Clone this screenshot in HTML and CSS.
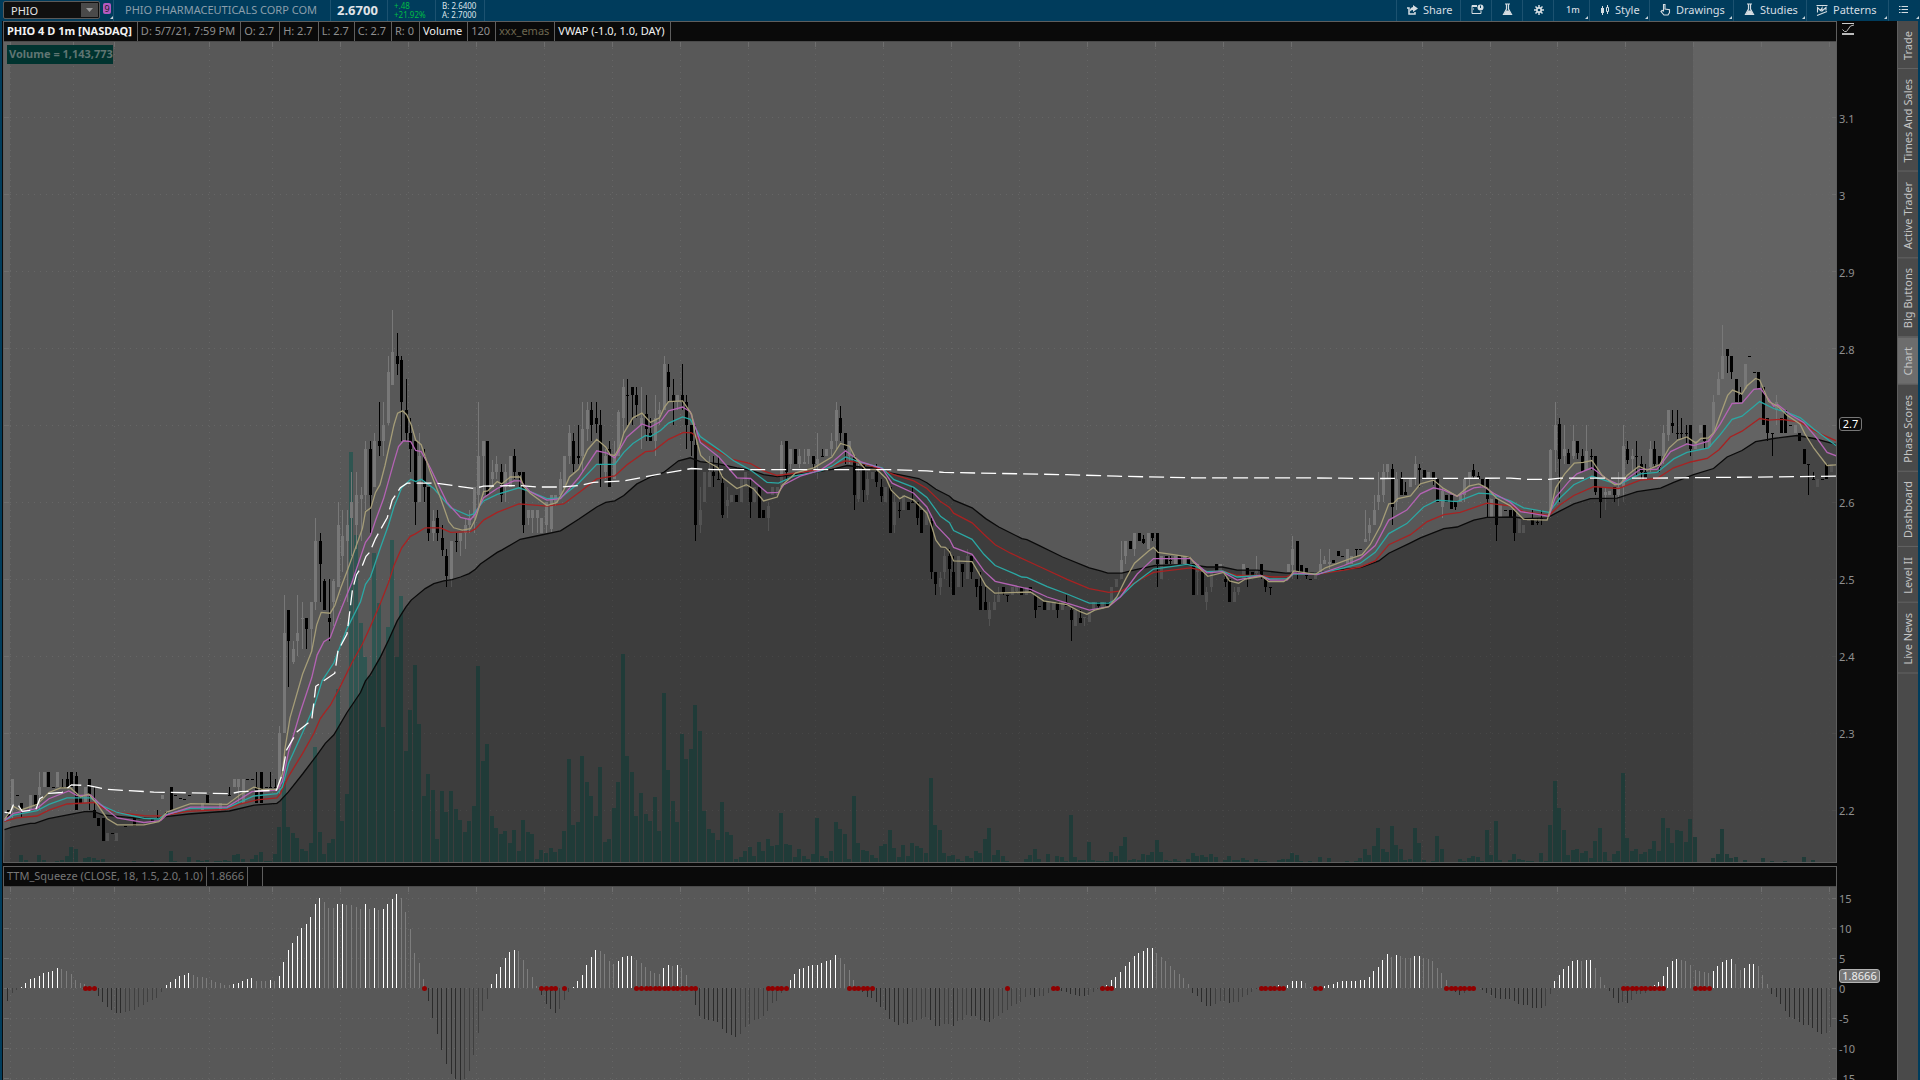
FILE: index.html
```html
<!DOCTYPE html>
<html lang="en">
  <head>
    <meta charset="UTF-8" />
    <meta name="viewport" content="width=device-width, initial-scale=1.0" />
    <title>PHIO 4 D 1m</title>
    <link rel="stylesheet" href="styles.css">
  </head>

  <body>
    <header class="toolbar">
      <div class="symbol-cell">
        <div class="symbol-box">
          <input type="text" id="symbol" value="PHIO" aria-label="Symbol" />
          <button type="button" class="drop" aria-label="Recent symbols">
            <svg width="7" height="4" viewBox="0 0 7 4"><path d="M0 0h7L3.5 4z" fill="#999" /></svg>
          </button>
        </div>
        <button type="button" class="link-badge more">9</button>
      </div>
      <div class="company">PHIO PHARMACEUTICALS CORP COM</div>
      <div class="last-price">2.6700</div>
      <div class="change"><span>+.48</span><span>+21.92%</span></div>
      <div class="quote"><span>B: 2.6400</span><span>A: 2.7000</span></div>

      <nav class="tools">
        <button type="button" class="tool share">
          <svg width="12" height="12" viewBox="0 0 12 12"><path d="M1 4h2v6h6V8" fill="none" stroke="#d5dde2" stroke-width="1.5" /><path d="M7 1l5 3.500-5 3.500V6C5 6 4 7 3.500 8.500 3.500 5 5 3.200 7 3z" fill="#d5dde2" /></svg>
          Share
        </button>
        <button type="button" class="tool icon" aria-label="Snapshot">
          <svg width="13" height="11" viewBox="0 0 13 11"><path d="M6 1.500H1v8h9V7" fill="none" stroke="#d5dde2" /><path d="M1 2.500h5M2 5h1" stroke="#d5dde2" /><circle cx="9.500" cy="3.500" r="3" fill="#d5dde2" /><path d="M9.500 1.500v2.500" stroke="#003c5c" /></svg>
        </button>
        <button type="button" class="tool icon" aria-label="Edit studies">
          <svg width="11" height="13" viewBox="0 0 11 13"><path d="M3 1h5M4.500 1v5L1.500 11.500h8L6.500 6V1" fill="none" stroke="#d5dde2" stroke-width="1.200" /><path d="M4 7.500h3l2.500 4.500h-8z" fill="#d5dde2" /></svg>
        </button>
        <button type="button" class="tool icon" aria-label="Settings">
          <svg width="12" height="12" viewBox="0 0 12 12"><path d="M6 1v10M1 6h10M2.500 2.500l7 7M9.500 2.500l-7 7" stroke="#d5dde2" stroke-width="1.500" /><circle cx="6" cy="6" r="3" fill="#d5dde2" /><circle cx="6" cy="6" r="1.300" fill="#003c5c" /></svg>
        </button>
        <button type="button" class="tool frame more">1m</button>
        <button type="button" class="tool style more">
          <svg width="10" height="12" viewBox="0 0 10 12"><path d="M2.500 2v9M7.500 1v9" stroke="#d5dde2" /><path d="M1 4h3v5H1z" fill="#d5dde2" /><path d="M6.500 3.500h2v4h-2z" fill="#003c5c" stroke="#d5dde2" /></svg>
          Style
        </button>
        <button type="button" class="tool drawings more">
          <svg width="11" height="13" viewBox="0 0 11 13"><path d="M3.500 8V1.500h1.500V6l4.500.8v2.700L8 12H4L1 8.500l1-1z" fill="none" stroke="#d5dde2" stroke-width="1.100" /></svg>
          Drawings
        </button>
        <button type="button" class="tool studies more">
          <svg width="11" height="13" viewBox="0 0 11 13"><path d="M3 1h5M4.500 1v5L1.500 11.500h8L6.500 6V1" fill="none" stroke="#d5dde2" stroke-width="1.200" /><path d="M4 7.500h3l2.500 4.500h-8z" fill="#d5dde2" /></svg>
          Studies
        </button>
        <button type="button" class="tool patterns more">
          <svg width="12" height="12" viewBox="0 0 12 12"><path d="M0.500 1.500h11M1 11.500L11 7.500M1.500 8.500V3.500l3 3L6 4v3l4-3.500v3" fill="none" stroke="#d5dde2" stroke-width="1.100" /></svg>
          Patterns
        </button>
        <button type="button" class="tool menu more" aria-label="Menu">
          <svg width="9" height="8" viewBox="0 0 9 8"><path d="M0 .5h1.500M0 3.500h1.500M0 6.500h1.500M2.500 .5H9M2.500 3.500H9M2.500 6.500H9" stroke="#d5dde2" /></svg>
        </button>
      </nav>
    </header>

    <main class="workspace">
      <section class="charts">
        <div class="pane price-pane">
          <div class="pane-body">
            <div class="pane-header">
              <strong class="hot">PHIO 4 D 1m [NASDAQ]</strong>
              <span>D: 5/7/21, 7:59 PM</span>
              <span>O: 2.7</span>
              <span>H: 2.7</span>
              <span>L: 2.7</span>
              <span>C: 2.7</span>
              <span>R: 0</span>
              <span class="hot">Volume</span>
              <span>120</span>
              <span class="emas">xxx_emas</span>
              <span class="hot">VWAP (-1.0, 1.0, DAY)</span>
            </div>
            <div class="plot">
              <svg id="priceChart" viewBox="4 42 1832 820" preserveAspectRatio="none"></svg>
              <div class="volume-tag">Volume = 1,143,773</div>
            </div>
          </div>
          <div class="axis price-axis">
            <button type="button" class="auto-scale" aria-label="Auto scale">
              <svg width="12" height="13" viewBox="0 0 12 13"><path d="M0 1.500h12" stroke="#ccc" /><path d="M0 12h12" stroke="#bbb" stroke-width="2" /><path d="M0.500 7.500L2.500 9.500H4.500L8.500 4 12 3" fill="none" stroke="#bbb" /></svg>
            </button>
            <span>3.1</span>
            <span>3</span>
            <span>2.9</span>
            <span>2.8</span>
            <span><b class="last">2.7</b></span>
            <span>2.6</span>
            <span>2.5</span>
            <span>2.4</span>
            <span>2.3</span>
            <span>2.2</span>
          </div>
        </div>

        <div class="pane study-pane">
          <div class="pane-body">
            <div class="pane-header">
              <span>TTM_Squeeze (CLOSE, 18, 1.5, 2.0, 1.0)</span>
              <span>1.8666</span>
              <span class="empty"></span>
            </div>
            <div class="plot">
              <svg id="squeezeChart" viewBox="4 887 1832 193" preserveAspectRatio="none"></svg>
            </div>
          </div>
          <div class="axis study-axis">
            <span>15</span>
            <span>10</span>
            <span>5</span>
            <span>0</span>
            <span>-5</span>
            <span>-10</span>
            <span>-15</span>
            <b class="value-tag">1.8666</b>
          </div>
        </div>
      </section>

      <nav class="side-tabs">
        <button type="button">Trade</button>
        <button type="button">Times And Sales</button>
        <button type="button">Active Trader</button>
        <button type="button">Big Buttons</button>
        <button type="button" class="active">Chart</button>
        <button type="button">Phase Scores</button>
        <button type="button">Dashboard</button>
        <button type="button">Level II</button>
        <button type="button">Live News</button>
      </nav>
    </main>

    <script src="chart.js"></script>
  </body>
</html>
```
FILE: styles.css
```css
* {
  box-sizing: border-box;
}

body {
  margin: 0;
  height: 100vh;
  display: flex;
  flex-direction: column;
  overflow: hidden;
  background: #0a0a0a;
  color: #8f8f8f;
  font-family: "Noto Sans", "Open Sans", sans-serif;
  font-size: 11px;
}

button {
  margin: 0;
  padding: 0;
  border: none;
  background: none;
  color: inherit;
  font: inherit;
}

/* top toolbar */

.toolbar {
  display: flex;
  flex: none;
  height: 21px;
  background: #003c5c;
}

.toolbar > div {
  border-right: 1px solid #1c5270;
}

.symbol-cell {
  display: flex;
  width: 114px;
  padding: 1px 0 0 3px;
  gap: 3px;
}

.symbol-box {
  display: flex;
  width: 97px;
  height: 18px;
  padding: 1px;
  border: 1px solid #5a5a5a;
  border-radius: 2px;
  background: #101010;
}

.symbol-box input {
  flex: 1;
  min-width: 0;
  padding: 0 0 0 6px;
  border: none;
  outline: none;
  background: none;
  color: #e4e4e4;
  font: inherit;
}

.drop {
  display: flex;
  align-items: center;
  justify-content: center;
  width: 17px;
  background: #4a4a4a;
}

.link-badge {
  position: relative;
  width: 8px;
  height: 11px;
  margin-top: 2px;
  border-radius: 2px;
  background: #b45ac0;
  color: #1c1c1c;
  font-size: 9px;
  line-height: 11px;
}

.company {
  width: 217px;
  padding-left: 11px;
  color: #8b9eab;
  line-height: 19px;
}

.last-price {
  width: 57px;
  padding-left: 6px;
  color: #e0e4e8;
  font-size: 13px;
  font-weight: bold;
  line-height: 21px;
}

.change,
.quote {
  display: flex;
  flex-direction: column;
  padding-left: 6px;
  font-size: 8px;
  line-height: 9px;
  padding-top: 1px;
}

.change {
  width: 48px;
  color: #00bc44;
}

.quote {
  width: 49px;
  color: #dde5ea;
}

.tools {
  display: flex;
  margin-left: auto;
}

.tool {
  position: relative;
  display: flex;
  align-items: center;
  gap: 5px;
  border-left: 1px solid #1c5270;
  padding: 0 0 2px 9px;
  color: #d5dde2;
}

.more::after {
  content: "";
  position: absolute;
  right: 1px;
  bottom: 2px;
  border-left: 3px solid transparent;
  border-bottom: 3px solid #c8d4da;
}

.link-badge::after {
  right: -2px;
  bottom: -5px;
}

.share {
  width: 64px;
}

.icon {
  width: 31px;
  padding-left: 10px;
}

.frame {
  width: 36px;
  padding-left: 12px;
  font-size: 9px;
  font-weight: 500;
}

.style {
  width: 60px;
  padding-left: 10px;
}

.drawings {
  width: 84px;
  padding-left: 10px;
}

.studies {
  width: 73px;
  padding-left: 10px;
}

.patterns {
  width: 82px;
}

.menu {
  width: 32px;
  padding-left: 10px;
}

/* chart area */

.workspace {
  display: flex;
  flex: 1;
  min-height: 0;
  border-left: 2px solid #003c5c;
  border-right: 2px solid #003c5c;
}

.charts {
  display: flex;
  flex: 1;
  flex-direction: column;
  min-width: 0;
  padding-left: 1px;
}

.pane {
  display: flex;
}

.price-pane {
  flex: 1;
  min-height: 0;
  margin-bottom: 3px;
}

.study-pane {
  height: 214px;
}

.pane-body {
  display: flex;
  flex: 1;
  flex-direction: column;
  min-width: 0;
  border: 1px solid #5e5e5e;
}

.study-pane .pane-body {
  border-bottom: none;
}

.pane-header {
  display: flex;
  flex: none;
  height: 20px;
  border-bottom: 1px solid #4a4a4a;
  line-height: 18px;
  white-space: nowrap;
}

.pane-header > * {
  padding: 0 5px 0 3px;
  border-right: 1px solid #5e5e5e;
}

.pane-header .hot {
  color: #f2f2f2;
}

.pane-header .emas {
  color: #6d6750;
}

.study-pane .pane-header {
  color: #777;
}

.study-pane .pane-header > * {
  padding: 0 3px;
}

.pane-header .empty {
  width: 15px;
}

.plot {
  position: relative;
  flex: 1;
  min-height: 0;
  background: #585858;
}

.plot svg {
  display: block;
  width: 100%;
  height: 100%;
}

.volume-tag {
  position: absolute;
  left: 3px;
  top: 3px;
  width: 106px;
  height: 19px;
  padding-left: 2px;
  background: #00332f;
  color: #5f7572;
  font-weight: bold;
  line-height: 18px;
  white-space: nowrap;
}

.axis {
  position: relative;
  display: flex;
  flex-direction: column;
  width: 60px;
  padding-left: 2px;
}

.price-axis {
  padding-top: 59px;
  padding-bottom: 14px;
}

.price-axis > span {
  display: flex;
  flex: 1;
  align-items: center;
}

.auto-scale {
  position: absolute;
  left: 5px;
  top: 1px;
}

.last {
  width: 23px;
  margin-bottom: 4px;
  border: 1px solid #777;
  border-radius: 3px;
  color: #fff;
  font-weight: normal;
  line-height: 12px;
  text-align: center;
}

.study-axis {
  padding-top: 18px;
  overflow: hidden;
}

.study-axis > span {
  flex: none;
  height: 30px;
  line-height: 30px;
}

.value-tag {
  position: absolute;
  left: 2px;
  top: 103px;
  width: 41px;
  border: 1px solid #b4b4b4;
  border-radius: 3px;
  background: #777;
  color: #efefef;
  font-weight: normal;
  line-height: 12px;
  text-align: center;
}

/* right tabs */

.side-tabs {
  display: flex;
  flex-direction: column;
  width: 21px;
  background: #4a4a4a;
  border-left: 1px solid #5e5e5e;
}

.side-tabs button {
  padding: 8px 0 10px;
  border-top: 1px solid #636363;
  color: #c4c4c4;
  line-height: 20px;
  writing-mode: vertical-rl;
  transform: rotate(180deg);
}

.side-tabs .active {
  background: #6d6d6d;
}

/* svg parts */

.grid {
  stroke: #666;
  stroke-dasharray: 1 5;
}

.tick {
  stroke: #6e6e6e;
}

.session {
  fill: #636363;
}

.vol {
  fill: #2f5551;
}

.up {
  fill: #787878;
}

.down {
  fill: #000;
}

.cloud {
  fill: #000;
  fill-opacity: 0.3;
}

.line {
  fill: none;
  stroke-width: 1.3;
}

.ema1 {
  stroke: #a59d78;
}

.ema2 {
  stroke: #b463b4;
}

.ema3 {
  stroke: #2ba8a4;
}

.ema4 {
  stroke: #a82222;
}

.ema5 {
  stroke: #0a0a0a;
}

.vwap {
  stroke: #fff;
  stroke-dasharray: 15 6;
}

.rise {
  fill: #fff;
}

.fade {
  fill: #7d7d7d;
}

.fall {
  fill: #2b2b2b;
}

.recover {
  fill: #404040;
}

.dot {
  fill: #900000;
}
```
FILE: chart.js
```javascript
const barX = (i) => 7.7 + i * 4.5236;
const priceY = (cents) => 348.5 + (280 - cents) * 7.695;

const gridX = [10, 73, 114, 209, 272, 340, 408, 476, 544, 612, 680, 748, 815, 883, 951, 1019, 1087, 1155, 1223, 1291, 1422, 1490, 1557, 1625, 1693, 1761, 1829];

const volume = [
  0, 0, 0, 7, 2, 0, 0, 7, 2, 0, 0, 1, 2, 6, 15, 13, 0, 4, 5, 4,
  2, 3, 0, 0, 0, 0, 0, 0, 1, 0, 0, 0, 1, 0, 0, 0, 11, 1, 0, 0,
  5, 0, 2, 1, 2, 0, 1, 1, 2, 1, 7, 8, 3, 0, 3, 7, 10, 1, 1, 8,
  35, 81, 35, 29, 24, 13, 11, 19, 115, 30, 8, 19, 23, 173, 41, 68, 410, 327, 239, 205,
  186, 309, 259, 135, 235, 322, 205, 266, 111, 152, 197, 138, 66, 88, 72, 23, 71, 50, 71, 53,
  42, 30, 41, 56, 196, 101, 118, 46, 34, 28, 31, 19, 32, 11, 42, 30, 28, 3, 12, 9,
  14, 10, 13, 31, 103, 37, 40, 106, 80, 66, 46, 95, 20, 23, 54, 80, 208, 106, 90, 46,
  69, 48, 41, 65, 31, 169, 92, 61, 40, 128, 103, 113, 157, 131, 51, 33, 29, 22, 60, 30,
  27, 3, 5, 11, 15, 6, 20, 11, 23, 16, 17, 49, 18, 17, 5, 13, 6, 3, 8, 44,
  6, 4, 11, 40, 33, 28, 3, 66, 19, 12, 11, 7, 4, 16, 18, 32, 14, 5, 17, 6,
  19, 16, 14, 9, 84, 37, 32, 9, 6, 7, 3, 1, 6, 4, 11, 9, 23, 34, 7, 12,
  6, 1, 0, 0, 0, 3, 7, 13, 3, 0, 8, 0, 6, 5, 1, 47, 5, 2, 2, 20,
  2, 1, 1, 1, 10, 6, 16, 25, 2, 3, 2, 8, 7, 10, 22, 10, 2, 1, 3, 1,
  0, 3, 9, 6, 7, 5, 8, 5, 0, 2, 6, 2, 2, 4, 2, 0, 3, 1, 1, 0,
  0, 2, 3, 3, 9, 7, 1, 0, 1, 0, 5, 0, 4, 0, 0, 0, 1, 0, 1, 4,
  13, 7, 16, 34, 13, 10, 36, 17, 13, 2, 3, 34, 19, 2, 0, 1, 26, 13, 0, 0,
  0, 3, 1, 4, 6, 5, 1, 32, 7, 41, 2, 0, 2, 8, 3, 2, 1, 1, 0, 9,
  1, 37, 81, 54, 32, 7, 12, 13, 9, 11, 4, 21, 34, 10, 1, 8, 11, 89, 24, 11,
  13, 8, 10, 13, 21, 11, 44, 34, 19, 32, 31, 20, 43, 25, 0, 0, 0, 4, 8, 33,
  8, 4, 5, 0, 2, 0, 0, 0, 4, 0, 1, 0, 0, 1, 0, 0, 0, 5, 0, 2,
];

// bar, high, low, open, close (prices in cents)
const candles = `
0 220 219 220 219|1 224 219 220 224|2 222 222 222 222|3 221 219 221 220|5 222 220 220 222|6 222 220.5 222 220.5
7 225 220 222 223|8 225 223 223 225|9 225 223 225 223|10 223 223 223 223|11 225 223 223 225|12 224 223 223 223
13 225 223 224 223|14 225 223 225 223|15 225 220 224.5 220|16 222 221 222 221|17 223 221 221 223|18 224 220 224 222
19 223 219 220 219|20 219 218 219 218|21 219 216 219 216|22 217 216 216 217|23 217 217 217 217|24 217 216 216 217
26 218 218 218 218|28 219 218 219 218|32 219 218.5 219 218.5|33 220 219 219 219|34 222 221.4 221.4 222|35 219.800 219.5 219.800 219.5
36 223 220 223 220|37 222 222 222 222|38 221.6 221.6 221.6 221.6|39 221.4 221.4 221.4 221.4|40 222 222 222 222|43 221 220 220 221
44 222 221 222 221|47 221 220 220 221|49 223 222 222 222|50 224 223 223 224|51 224 221 223 224|52 224 221 221 224
53 224 224 224 224|54 224 224 224 224|55 225 221 223 221|56 225 221 225 221|57 223 223 223 223|58 225 223 223 223|59 224 223 223 223
60 231 222 223 230|61 248 230 230 243|62 246 236 246 242|63 242 239 239.3 241|64 248 240 242 243|65 247 241 244.800 245
66 245 241 245 243.5|67 247 240.5 243.5 247|68 258 246 247 255|69 256 247 255 252|70 250 246 249.800 246|71 250 242 245 244.5
72 250 244 247 249.800|73 260 249 249 257|74 259 251 253 255.6|75 259 247 255 257|76 264 253 258 260|77 264 254 257 261
78 262 255 260.5 261|79 268 259 261 267|80 268 256 267 261|81 269 262 262 268|82 273 266 268 267.3|83 273 266 268 270
84 279 270 270.3 277|85 285 275.3 275.3 279.5|86 282 276.6 279 278|87 279 268 278.5 273|88 276 268 272 269|89 271 264 269 267
90 268 257 268 260|91 269 260 260 266|92 267 260 266 262|93 262 255 262 256|94 259 255 256 257.6|95 259 255 258 256
96 257 253 255.4 253.800|97 254 249 253 250.4|98 255 249 250 255|99 256 253.5 255 255|100 256 253 255 256|101 258 254 256 257
102 259 256 257 258|103 262 256 258 262|104 273 259 261 266|105 268 261 266 268|106 268 261 268 261|107 265.5 262 263 264
108 266 263 264 265|109 265 260 264 261|110 265 260 262 264|111 266 262 262 266|112 267 263 266 264|113 264 262 264 263.5
114 264 256 264 257|115 259 257 258 259|116 259 256 258 259|117 259 256 258 259|118 258 256 256 258|119 260 256 257 260
120 261 256 256.5 261|121 261 259.5 260 261|122 264 261 261 263|123 266 262 262 266|124 270 265 266 269|125 269 264 268 265
126 270 265 266 265.800|127 273 264 266 269.5|128 273 268 269.5 272|129 273 268 272 270|130 273 269 271 270.2|131 272 262 270 265
132 267 263 264 266|133 268 262 267 262|134 268 263 263 266|135 272 266 266 271.7|136 276 269 271 275|137 276 270 274 273.800
138 275 270 275 274|139 275 271 274 272.6|140 275 267 270 271|141 274 268 271.5 269.5|142 271 268 269 268|143 274 266 268 271
144 273 270 271.5 272|145 279 272 272 278|146 278 273 277 275|147 276 270 274 273|148 274 272 273 274|149 278 272 274 273
150 274 267 273 270|151 270 266 270 268|152 270 255 267.5 257|153 262 256 257 259|154 264 260 260 264|155 266 262 262 264
156 266 262 264 263.4|157 266 263 263 263|158 263.5 258 262.5 258.4|159 262 258 259.5 260.3|160 261 260 260 261|161 261 260 261 260
162 263 260 260 263|163 264 262 262 264|164 263 258 262 260|165 262 260 260 262|166 262 258 262 258|167 259 258 259 258
168 260 256.3 258 259.5|169 262 261 261 262|170 262 261 261 262|171 268 262 262 267.4|172 268 263 268 264|173 267 264.4 265 267
174 267 265 267 265|175 267 264.5 265 266|176 267 265 265 265.2|177 267 265 266 267|178 266 264 266 265|179 269 263 265 265.6
180 267 266 266 266|181 267 266 266 267|182 269 266 267 268|183 273 267 268 272|184 272.5 268 271 269|185 269 265 269 267
186 268 265 266 268|187 266 259 266 261|188 265 260 260.5 264|189 265 260 265 261.6|190 264 260.3 261 263|191 264 263 263 264
192 265 262 264 262.6|193 263 260 262 260.800|194 262 260 260 262|195 262 256 262 256|196 261 256 257 260|197 260 258 259 259
198 261 259 259 261|199 260 259 260 259|200 262 260 260 260|201 260 257 260 258|202 259 256 259 256|203 259 257 257 259
204 258 250 257.6 251|205 251 248 251 249.4|206 251 248 249 250.2|207 254 250 251 253|208 254 249 253 251.3|209 253 248 251 248
210 253 249 249 253|211 252 249 252 251|212 254 250 250 253|213 253 250 253 251|214 250 247.7 250 249|215 251 246 249.2 246
216 249 246 247 246|217 247 244 244.800 246|218 248 246 246 247|219 249 247 247 248|220 249 248 249 248.4|221 248 247 248 247.800
222 249 248 248 249|223 249 248.4 248.5 249|224 249 248 249 248|225 249 248 248 249|226 249 248.4 249 248.4|227 248 245 248 246
228 246.5 246.5 246.5 246.5|229 247 246 247 246|230 247 246 246 247|231 247 246 246 247|232 247 245 247 246|233 247 246 246 247
234 248 246.5 247 246.6|235 246.3 242 246 244.7|236 246 244 244 246|237 246 244.3 245 244.3|238 245 244 245 245.1|239 245.7 244.5 244.5 245.7
240 247 246 246 247|241 247 246.2 247 246.6|242 247 246.2 246.2 247|243 247 246.4 247 246.4|244 249 247 247 249|245 250 249 249 250
246 255 250 250 252.5|247 255 252 253 255|248 255 254 255 254|249 256 253 254 256|250 256 255 256 255|251 255.7 254.6 255.2 254.7
252 256 254 254 256|253 256 255 256 255.4|254 256 249 256 252|255 253 250 250 253|256 253 252 253 252|257 253 252 252.5 252.5
258 253 252 252 253|259 253 252 253 252|260 253 252 252 253|261 253 252 253 252|262 252 248 252 248|263 252 248 251 252
264 251 248 251 248|265 249 246 247 248.4|266 251 248.4 249 251|267 252 251 252 251|268 252 251 251 252|269 251 249 250 249.6
270 250 247 250 247|271 249 247 247 248.4|272 249 248 248.4 249|273 252 250 250 252|274 251.5 249 251.5 250|275 251 250.5 251 250.5
276 253 250.5 250.800 251.2|277 252 250 252 250.3|278 250 248.3 250 249|279 249 248 249 249|283 252 251 251 252|284 255.6 250 251.800 254
285 255 250 255 251|286 251.800 251 251.800 251|287 251.5 250 251.5 250.4|288 250 250 250 250|289 251 250 250 251|290 254 251 251 252
291 253 252 252 252.5|292 254 251.3 252 252.3|293 252.5 252.1 252.5 252.1|294 253.7 253 253.7 253|295 253 253 253 253|296 254 252 252 254
297 253 252 252 253|298 254 253 254 254|299 254 254 254 254|300 259 254.800 254.800 255.3|301 258 255 256 257|302 261 257 257 259
303 264 259 260 261|304 265 260 261 264|305 265 263 264 265|306 265 257 264.4 259.4|307 264 259 260 263|308 264 261 263 261
309 262.6 261 261.3 261|310 263 262 262 263|311 266 262.2 263 265|312 265 262 264.5 264.2|313 264.2 263 264.2 263|314 264 263 263 264
315 264 262.2 264 263|316 263 260 263 260|317 262 258 259.4 261.5|318 261 260 261 260|319 261 259.2 261 259.2|320 260 259 260 259.4
321 261 260 260 261|322 263 260 261 263|323 264 262 263 264|324 265 263 264.2 263.4|325 264 263 263.4 263|326 263 262 263 262
327 263 258 263 260.5|328 260.5 258 258 260.5|329 260.5 255 260.5 257|330 259.6 258 258 259.6|331 259 259 259 259|332 259 258 259 258
333 259 255 259 256|334 258 256 256 258|335 257 256 256 257|336 258 257.6 257.6 258|337 259 257 258 257|338 258 257 257.5 257.5|339 259 257 258 258
341 267 258 259 266.800|342 273 264 266.800 270|343 271 260 270.2 265.7|344 270 265 266 267|345 267 265 266.4 265|346 270 265.7 266 268
347 268 265.7 268 266.4|348 267 264 266 264|349 270 265 264.2 266.7|350 267 264.2 266 265.9|351 266 261 266 261.3|352 262 258 262 260
353 262 259 261 261.4|354 261.5 261 261 261.5|355 262 260 262 261|356 264 259.5 261 262|357 270 260 262 267.3|358 268 265 267 265.5
359 267 264 265.6 266|360 268 263.4 266 266|361 266 263 265 264|362 265 263 264 263|363 268 264 264.6 267|364 268 264.6 267 265
365 266 264 266 264.6|366 270 265 266 269|367 272 268 268.800 272|368 272 269 270.3 269.9|369 272 268.2 269 269|370 271 268.2 269 269
371 270 267.7 269 269|372 270 266 270 267|373 268 267 267 268|374 270 269 269 270|375 270 267 270 268|376 268.3 267.2 267.2 268.3
377 274 269 269 273|378 277 274 274 276|379 283 276 276 279|380 280 276.800 280 279|381 279 276 279 277|382 276 273 276 273
383 275 273 274 273|384 278 274.800 274.800 278|385 279 279 279 279|386 277 277 277 277|387 277 274.800 277 274.800|388 275 270 275 270
389 271 268 271 269|390 269 266 269 269|391 274 270 272 273|392 271 269 271 269|393 272 269 272 269|394 270 270 270 270
395 270 269 269 270|396 269 268 269 268|397 267 265 267 265|398 265 261 265 265|399 264 263 263 263|400 263 262 262 263
401 263 263 263 263|402 265 263 265 263|403 265 264 264 265`
  .trim()
  .split(/[|\n]/)
  .map((row) => row.split(" ").map(Number));

// bar,price pairs
const ema1 = `-0.7,218.8 1.3,220.5 2.8,220 6.5,220.75 9.1,222.3 11.7,222.9 13.9,222.9 16.1,221.7 17.9,222.1 19.8,220.75 22,218.9 24.2,218.1 30.1,218.1 33.4,218.5 35.2,219.75 40.4,220.85 48.5,220.75 51.4,222 54.4,223 56.2,222.7 59.5,222.7 60.7,224.7 61.3,228 62.4,232 65.2,237.7 67.2,240.65 68.3,244.1 69.3,245.7 71.3,245.6 72.3,246.6 73.6,248.85 75.2,251.35 78.4,256.6 79.1,258.8 80.3,259.3 81.3,261.3 82.3,262.3 83.4,264.8 85.4,270.1 86.2,271.6 87.3,271.9 88.2,271.4 89.2,270.1 90.2,268.1 91.4,267.5 93.4,264 95.7,260.55 97.5,257.5 98.6,256.7 100.5,256.4 102.3,256.6 103.4,257.8 105.2,261.4 106.1,261.5 108.2,262.7 109.2,262.4 111.1,263.3 113.3,263.3 114.1,262.05 115.5,261.2 119.2,259.6 121.4,260 122.9,261.6 124.2,263.3 126.2,264.3 128.2,266.85 130.2,268.2 132.2,267.2 133.2,266.2 134.2,266.1 135.3,267.2 136.2,269 138.2,271 140.2,271.6 142.1,270.4 144.1,271 145.2,272.4 146.1,273.1 149.2,273.2 151.2,271.45 152.1,268.5 153.2,266.1 154.6,265.3 157,264.5 158.1,263.2 161.2,261.8 163.3,262.3 164.9,261.75 167.1,260.2 170.1,260.7 171.2,262.2 174.2,263.85 178.2,264.5 182.2,265.9 184.1,267.65 186.1,267.3 187.4,265.8 189.6,264.3 192.2,264.25 194.2,263.1 195.3,261.6 197.2,260.5 198.2,260.85 200.3,260.3 203.2,258.6 204.3,256.8 205.2,255.1 206.3,254.2 207.3,254.15 208.2,253.6 209.1,252.4 213.2,252.3 214.7,250.8 216.2,249.2 218.2,248.2 226.1,248.35 229,247.2 234.2,246.7 237.1,245.8 238.6,245.45 240.3,246 243.4,246.45 245.2,247.75 247.2,250.1 249.1,252.1 252.2,253.7 253.3,254.15 254.3,253.5 261.3,252.9 262.2,252.2 265.3,250.4 268.8,250.9 270.1,249.8 272.1,249.5 273.6,250.05 277.3,250.4 278.8,249.7 282.1,249.7 283.4,250.3 284.3,251.1 289.1,250.65 291.3,251.5 296.8,252.7 299.4,253.2 301.2,254.5 303.5,257 305.3,259.8 306.4,259.9 307.3,260.5 310.1,260.85 312.3,262.4 315.2,262.9 317.2,261.9 320.4,260.8 323,262.1 325.2,262.4 327,261.9 329.2,260.5 332.2,259.55 335.1,257.8 340.3,257.7 341.2,259.4 342.2,261.9 344.2,263.7 346.3,265.1 348.3,265.2 350.2,265.45 352.5,263.5 355.3,262.3 356.5,262.4 358,263.5 360.6,264.7 362.4,264.2 365.2,264.9 367.3,267.1 369.2,268.1 371.2,268.5 373.2,267.7 374.3,268.3 376,268.4 377.2,269.1 378.3,270.9 380.2,273.9 381.3,274.6 383.4,274.1 384.5,275.15 386.4,276.1 387.3,275.9 389.3,273.1 391.3,272.5 393.4,271.3 396.2,270.2 397.3,268.9 399.3,267 402.2,264.8 404.4,264.9`;

const ema2 = `-0.7,218.65 1.3,219.6 6.5,220.25 9.1,221.5 13.5,222.5 15.3,221.9 18.3,222 20.5,220.75 24.2,219 30.1,218.4 33.8,218.65 35.2,219.4 40.4,220.4 48.5,220.4 54,222.4 59.5,222.6 60.7,223.7 62.1,227.6 64.7,232.8 67.2,237.2 68.4,240.15 69.9,241.9 71.3,242.4 73.2,245.4 76.1,249.6 79.1,254.8 80.2,255.7 81.3,257.65 83.1,260.5 85.4,265.3 86.4,267.25 87.5,268 89.1,267.9 90.2,266.75 91.4,266.6 93.4,264.5 97.1,260 100.1,258.05 102.3,257.75 103.4,258.5 105.2,260.6 108.2,261.8 111.9,262.8 113.3,262.8 115.5,261.4 119.2,260.3 122.2,260.5 126.2,263.2 130.2,266.7 132.5,266.4 134.2,265.8 136.9,268.5 140.2,270.2 142.1,269.8 144.3,270.5 146.1,271.9 149.2,272.4 150.9,271.8 153.1,267.8 157.2,265.9 161.2,263.2 164.2,263.1 167.9,261.25 170.4,261.3 171.6,262.3 175.2,263.4 179.7,264.2 182.2,265.2 185.2,266.7 188.5,265.3 193.3,264.4 195.5,262.5 200.3,261.2 203.2,259.4 205.2,257.05 208.2,255.2 209.1,254.15 213.2,253.25 215.8,251.1 218.3,249.75 226.1,248.7 229.8,247.7 234.2,246.9 239.1,246 243.4,246.45 246,247.75 249.7,250.7 253.3,252.7 261.5,252.7 262.9,251.95 265.1,250.85 268.5,251 271.8,249.9 276.9,250.5 279.1,249.9 282.8,249.9 284.3,250.85 289.5,250.6 295.4,251.8 299,252.7 302.3,254.4 305.3,257.7 309.3,259 312.3,261.1 315.2,261.9 317.5,261.6 320.4,260.8 324.1,261.9 326.3,262.05 328.5,261.2 332.2,260 334.4,258.8 340.7,258.2 342.1,260.6 345.1,262.7 346.9,263.7 350.2,264.5 353.6,263 356.1,262.3 360.9,264.3 364.6,264.3 367.6,266.6 371.2,267.6 372.7,267.4 376,267.95 378.6,270.2 381.2,272.85 383.4,272.9 386,274.7 387.5,274.8 390.4,272.5 391.3,272.7 394.1,271.4 397,270.4 400,268.3 402.2,266.5 404.4,266`;

const ema3 = `-0.7,218.65 1.3,219.35 6.5,219.95 9.1,220.75 13.1,221.6 18.3,221.6 21.2,220.5 24.2,219.7 30.1,218.95 33.4,218.85 34.5,219.35 40.4,220.25 48.5,220.3 54.4,221.85 59.5,222.15 60.7,223 62.1,226.1 65.2,230.1 67.7,233.4 69.5,236.8 72.1,239.15 75,243.6 78,247.1 79.1,249.35 80.2,250.3 82.4,254.1 84.2,257.1 85.4,259.45 87.1,261.9 89.1,263 90.2,262.7 91.4,263 94.2,261.8 97.9,259.3 101.9,258.3 103,258.5 105.2,260.2 108.2,261.05 113,261.9 115.5,261.4 119.2,260.5 122.2,260.6 126.2,262.5 130.2,264.95 134.2,264.95 136.2,266.5 138.2,267.65 141,268.7 142.1,268.55 144.3,269.35 146.1,270.3 149.2,271.1 150.9,270.8 153.1,268.55 157.5,266.75 160.5,265.4 164.2,264.2 167.9,262.6 170.4,262.5 173.8,263.4 179.7,264.1 182.2,264.7 185.2,265.9 188.5,265.2 193.3,264.5 195.9,262.95 200.3,261.95 203.2,260.65 206.2,258.2 208.2,257.35 209.1,256.35 213.2,255.2 215.8,253.25 218.3,251.8 224.2,250.3 225.3,250.25 229.8,249.05 234.2,248.1 239.1,246.9 243.4,246.9 246,247.75 248.9,249.4 253.3,251.35 260.7,251.95 262.6,251.7 265.1,251 268.5,251.1 271.8,250.3 276.9,250.5 279.1,250.05 282.8,250.1 284.3,250.7 289.5,250.7 295.4,251.5 299,252.1 302.3,253.5 305.3,255.95 309.3,257.25 313,259.4 316,260.3 320.4,260.1 325.2,261.2 327.8,261.1 332.2,260.2 335.1,259.3 340.7,258.7 343.2,260.6 346.2,262.3 350.2,263.4 356.1,262.3 360.9,263.7 364.6,263.9 368.3,265.65 371.2,266.5 376,267.1 378.6,268.8 381.2,270.8 383.4,271.2 387.3,273.1 390.4,272.2 393.4,271.7 396.3,271 399.3,269.5 404.4,267.3`;

const ema4 = `-0.7,218.55 2,219 6.5,219.25 9.1,220 13.1,220.8 19.1,221 21.2,220.25 24.2,219.7 30.1,219.3 33.8,219.25 39.7,219.85 48.5,220.1 51.1,220.75 55.1,221.35 59.5,221.6 60.3,222.2 62.1,224.4 65.2,227.4 67.7,230 69.1,231.9 70.2,232.8 71.3,233.6 73.2,235.7 76.1,239.15 78.4,241.6 80.2,243.9 82.4,246.9 84.2,249.6 85.4,251.8 87.1,254.1 89,255.6 90.1,255.9 92.3,256.7 95.7,256.7 97.9,256.1 102.3,256.2 103.4,256.55 105.2,257.7 108.2,258.7 113,259.8 119.2,259.5 122.9,259.8 126.6,261.4 130.2,263.05 134.2,263.45 136.9,264.9 141,266.6 142.8,266.7 146.1,268.2 149.4,269.1 151.2,269.05 152.8,268.2 157.5,266.5 160.5,265.55 164.2,265.05 167.1,264.1 170.1,263.5 175.2,263.9 181.1,264.4 185.2,265.4 188.1,265.2 192.2,264.5 195.9,263.6 200.3,262.8 203.2,261.8 206.2,260.1 208.2,259.35 209.1,258.6 213.2,257.35 215.8,255.85 218.3,254.5 221.7,253.4 228.3,251.6 234.2,250 239.1,248.8 243.4,248.3 246.3,248.5 248.9,249.5 253.3,250.9 261.5,251.5 265.1,251 268.5,251.1 271.8,250.5 276.9,250.5 279.9,250.3 282.8,250.35 284.3,250.7 289.5,250.7 295.4,251.2 299,251.6 302.3,252.4 305.3,254.5 310.1,255.8 313.8,257.5 317.5,258.4 321.1,258.7 327,259.9 332.2,259.55 335.1,258.8 340.7,258.3 343.2,259.7 346.2,260.9 350.6,262.05 356.1,261.8 360.9,262.9 364.6,263.1 368.3,264.5 372,265.25 375.7,265.7 378.3,266.85 380.8,268.5 383.4,269.25 387.3,270.9 389.3,270.7 392.3,270.8 396.3,270.4 399.3,269.3 404.4,267.95`;

const ema5 = `-0.7,217.46 1,217.8 5,218.3 6,218.3 9,218.9 13,219.35 17,219.8 19,219.85 21,219.4 28,219 33,218.9 35,219.15 40,219.5 49,219.9 54.5,220.65 59.5,220.9 60.2,221.2 62,222.35 65.2,224.7 68.4,227.2 70.2,228.7 72.1,229.8 75,232.7 78,235.3 79.1,236.8 80.2,237.65 82.4,239.9 84.2,242.1 86.1,244.6 88,246.4 89.2,247.3 92.3,248.8 94.2,249.45 96.4,249.8 98.2,249.95 100.1,250.3 102,250.75 103.4,251.3 104.5,252 108.2,253.5 109.2,253.8 113.3,255.2 117.4,255.7 122.2,256.3 126.2,257.8 130.2,259.4 132.2,260 134.2,260.2 136.2,260.9 139.1,262.4 142.1,263.3 145,263.9 148.3,265.4 150.9,265.8 153.1,265.3 157.2,265 161.2,264.5 164.2,264.2 167.1,263.6 170.1,263.35 173.8,263.6 178.2,263.9 182.2,264.3 185.6,264.8 188.5,264.6 192.2,264.5 195.1,263.85 201.4,263.1 203.2,262.55 205.2,261.7 208.2,260.8 209.1,260.3 213.2,259.3 216.2,257.9 219.1,256.8 224.2,255.3 225.3,255.15 227.6,254.5 233.2,252.9 239.1,251.5 241.6,251.1 243.2,250.8 246.3,250.8 248.9,251.2 253.7,251.8 261.5,251.9 265.1,251.6 268.5,251.6 271.8,251.2 276.2,251.2 282.5,250.8 289.5,250.8 291.7,251 295.4,251.3 299.2,251.55 303.1,252.4 305.3,253.4 310.1,254.75 312.3,255.4 317.5,256.6 320.4,256.8 324.1,257.7 327,258.05 333.3,258.1 335.1,257.9 340.3,258 343.2,258.9 346.2,259.8 349.9,260.5 355.8,260.55 360.2,261.4 365.4,261.85 368.3,262.6 372.7,263.6 377.1,264.4 380.1,265.9 383.4,266.75 386.4,267.9 390.4,268.3 395.6,268.7 399.3,268.3 404.4,267.5`;

const vwap = `-0.7,219.75 0.5,219.6 1.2,220.65 2.1,220.85 3.2,219.85 6.2,220.05 7.1,221.5 9.1,222.2 12,222.3 14.1,223.3 17.9,223.2 22,222.7 32.3,222.35 49.2,222.15 51.4,222.4 59.4,222.6 60.7,224.7 61.6,227.8 64,230.2 67.2,231.7 68.1,236.1 72.3,237.8 73,240.65 75,242.9 76.2,248.6 77.1,250.6 78.4,251.8 79.2,253 80,253.5 81.3,255.3 83.9,258 85,260.3 86.8,261.9 88.3,262.5 94.9,262.5 103,261.8 105.2,262.1 113.3,262.2 117,262 122.2,262 126.6,262.2 129.5,262.6 136.2,262.8 144.3,263.7 151.2,264.4 156,264.25 195.1,264.25 203.2,264.1 206.9,263.9 234.2,263.6 245.2,263.4 262.2,263.2 283.6,263.2 302.7,263.1 332.2,263.15 335.9,263 340.7,263 343.2,263.15 362.4,263.15 404.4,263.4`;

const squeeze = [
  -13, -5, -2, 1, 5, 9, 10, 12, 15, 16, 17, 20, 19, 17, 14, 8, 5, 4, 0, 0,
  -8, -14, -19, -22, -25, -25, -24, -23, -22, -19, -17, -14, -12, -10, -4, 3, 6, 9, 12, 13,
  15, 13, 11, 11, 10, 8, 6, 5, 3, 3, 4, 5, 7, 9, 10, 7, 7, 7, 8, 7,
  12, 26, 38, 45, 52, 60, 64, 71, 84, 90, 86, 80, 80, 84, 84, 83, 83, 81, 79, 84,
  79, 80, 78, 79, 84, 89, 94, 90, 76, 59, 35, 25, 9, -13, -30, -46, -62, -76, -86, -91,
  -92, -91, -83, -67, -45, -23, -11, 4, 14, 21, 30, 36, 38, 37, 28, 19, 11, 2, -7, -16,
  -21, -25, -21, -12, -4, 1, 7, 13, 23, 31, 38, 37, 34, 27, 24, 27, 31, 32, 32, 28,
  25, 21, 17, 15, 14, 20, 23, 22, 23, 20, 13, 1, -17, -28, -31, -32, -33, -34, -41, -45,
  -47, -49, -46, -39, -36, -32, -31, -28, -23, -15, -13, -5, -1, 8, 14, 19, 20, 22, 23, 23,
  25, 27, 28, 33, 30, 24, 18, 8, 2, -4, -9, -10, -14, -19, -22, -31, -34, -37, -35, -36,
  -34, -32, -31, -29, -32, -38, -38, -36, -36, -38, -33, -32, -27, -28, -28, -32, -33, -34, -31, -28,
  -25, -22, -18, -16, -14, -9, -7, -9, -8, -8, -5, -1, -1, -3, -4, -6, -7, -8, -8, -7,
  -4, -1, 0, 3, 8, 11, 16, 22, 26, 32, 35, 37, 40, 40, 35, 31, 27, 22, 18, 14,
  10, 4, -5, -8, -14, -18, -18, -16, -13, -13, -15, -14, -14, -9, -7, -4, -1, 0, 0, 0,
  0, 3, 2, 3, 7, 7, 7, 5, 1, 1, 1, 2, 3, 4, 6, 7, 7, 7, 7, 8,
  8, 11, 17, 21, 28, 34, 31, 33, 32, 30, 30, 32, 32, 30, 29, 27, 20, 15, 8, 1,
  -4, -7, -5, -1, -1, 0, -2, -5, -7, -10, -11, -11, -11, -13, -16, -17, -17, -20, -20, -20,
  -18, -6, 7, 13, 19, 22, 27, 28, 27, 28, 28, 20, 11, 3, -3, -10, -15, -14, -15, -12,
  -6, -6, -5, -1, 3, 6, 12, 21, 27, 29, 28, 27, 23, 18, 17, 16, 15, 17, 22, 26,
  28, 29, 24, 18, 20, 24, 24, 22, 13, 4, -6, -9, -16, -23, -29, -31, -34, -37, -37, -40,
  -44, -46, -45, -39,
];

// first and last bar of each squeeze run
const squeezeRuns = [[17, 19], [92, 92], [118, 121], [123, 123], [139, 152], [168, 172], [186, 191], [221, 221], [231, 232], [242, 244], [277, 282], [289, 290], [318, 324], [357, 366], [373, 376]];

function rect(cls, x, y, w, h) {
  return `<rect class="${cls}" x="${x}" y="${y}" width="${w}" height="${h}"/>`;
}

function hLine(cls, x1, x2, y) {
  return `<path class="${cls}" d="M${x1} ${y}H${x2}"/>`;
}

function vLine(cls, x, y1, y2) {
  return `<path class="${cls}" d="M${x} ${y1}V${y2}"/>`;
}

function toPoints(text) {
  return text
    .split(" ")
    .map((pair) => {
      const [bar, cents] = pair.split(",").map(Number);
      return `${barX(bar).toFixed(1)},${priceY(cents).toFixed(1)}`;
    })
    .join(" ");
}

function drawPrice() {
  let out = rect("session", 4, 42, 6, 820) + rect("session", 1693, 42, 143, 820);

  for (let cents = 220; cents <= 310; cents += 10) {
    const y = Math.floor(priceY(cents)) + 0.5;
    out += hLine("grid", 4, 1836, y) + hLine("tick", 4, 9, y) + hLine("tick", 1832, 1836, y);
  }
  gridX.forEach((x) => {
    out += vLine("grid", x + 0.5, 42, 862) + vLine("tick", x + 0.5, 42, 47);
  });

  volume.forEach((h, i) => {
    if (h) out += rect("vol", Math.round(barX(i)) - 2, 862 - h, 4, h);
  });

  candles.forEach(([i, high, low, open, close]) => {
    const x = Math.round(barX(i));
    const cls = close > open ? "up" : "down";
    const top = Math.round(priceY(Math.max(open, close)));
    const bottom = Math.round(priceY(Math.min(open, close)));
    const wickTop = Math.round(priceY(high));
    out += rect(cls, x, wickTop, 1, Math.round(priceY(low)) - wickTop);
    out += rect(cls, x - 1, top, 3, Math.max(1, bottom - top));
  });

  const slow = toPoints(ema5);
  out += `<polygon class="cloud" points="4,862 ${slow} 1836,862"/>`;
  out += `<polyline class="line ema5" points="${slow}"/>`;
  out += `<polyline class="line ema4" points="${toPoints(ema4)}"/>`;
  out += `<polyline class="line ema3" points="${toPoints(ema3)}"/>`;
  out += `<polyline class="line ema2" points="${toPoints(ema2)}"/>`;
  out += `<polyline class="line ema1" points="${toPoints(ema1)}"/>`;
  out += `<polyline class="line vwap" points="${toPoints(vwap)}"/>`;

  document.getElementById("priceChart").innerHTML = out;
}

function drawSqueeze() {
  let out = "";

  for (let y = 898.5; y < 1080; y += 30) {
    out += hLine("grid", 4, 1836, y) + hLine("tick", 4, 9, y) + hLine("tick", 1832, 1836, y);
  }
  gridX.forEach((x) => {
    out += vLine("grid", x + 0.5, 887, 1080) + vLine("tick", x + 0.5, 887, 892);
  });

  let rising = false;
  squeeze.forEach((v, i) => {
    const prev = i ? squeeze[i - 1] : v;
    if (v !== prev) rising = v > prev;
    let cls = rising ? "recover" : "fall";
    if (v > 0) cls = rising ? "rise" : "fade";
    out += rect(cls, Math.floor(barX(i)), v > 0 ? 988 - v : 988, 1, Math.abs(v));
  });

  squeezeRuns.forEach(([from, to]) => {
    for (let i = from; i <= to; i++) {
      out += `<circle class="dot" cx="${Math.round(barX(i)) + 0.5}" cy="988.5" r="2.5"/>`;
    }
  });

  document.getElementById("squeezeChart").innerHTML = out;
}

drawPrice();
drawSqueeze();
```
